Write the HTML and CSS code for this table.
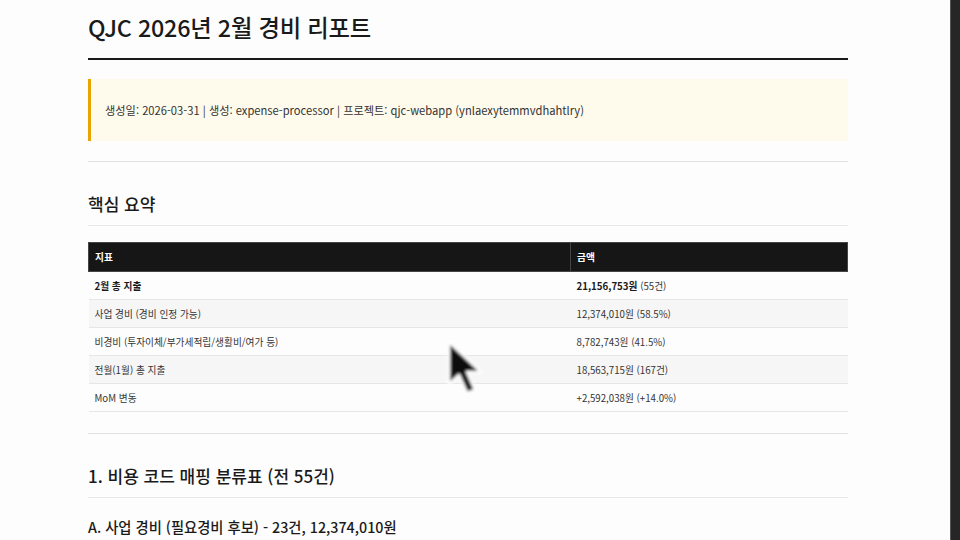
FILE: index.html
```html
<!DOCTYPE html>
<html lang="ko">
<head>
<meta charset="utf-8">
<link rel="stylesheet" href="styles.css">
</head>
<body>
<div class="screen">
  <main class="doc">
    <h1 class="title">QJC 2026년 2월 경비 리포트</h1>
    <div class="meta">생성일: 2026-03-31 | 생성: expense-processor | 프로젝트: qjc-webapp (ynlaexytemmvdhahtlry)</div>
    <hr class="rule">
    <h2 class="h2">핵심 요약</h2>
    <table class="summary">
      <thead>
        <tr><th class="c1">지표</th><th>금액</th></tr>
      </thead>
      <tbody>
        <tr><td class="strong">2월 총 지출</td><td><b>21,156,753원</b> (55건)</td></tr>
        <tr class="alt"><td>사업 경비 (경비 인정 가능)</td><td>12,374,010원 (58.5%)</td></tr>
        <tr><td>비경비 (투자이체/부가세적립/생활비/여가 등)</td><td>8,782,743원 (41.5%)</td></tr>
        <tr class="alt"><td>전월(1월) 총 지출</td><td>18,563,715원 (167건)</td></tr>
        <tr><td>MoM 변동</td><td>+2,592,038원 (+14.0%)</td></tr>
      </tbody>
    </table>
    <hr class="rule rule-b">
    <h2 class="h2">1. 비용 코드 매핑 분류표 (전 55건)</h2>
    <h3 class="h3">A. 사업 경비 (필요경비 후보) - 23건, 12,374,010원</h3>
  </main>
  <div class="edge"></div>
  <svg class="cursor" width="48" height="64" viewBox="0 0 48 64">
    <defs><filter id="blur"><feGaussianBlur stdDeviation="1.8"/></filter></defs>
    <g filter="url(#blur)">
      <path d="M7 5 L7 47 L17 38 L25 56 L33 53 L25 35 L39 35 Z" fill="#111" stroke="#fff" stroke-width="2.5" stroke-linejoin="round"/>
    </g>
  </svg>
</div>
</body>
</html>
```

FILE: styles.css
```css
* { box-sizing: border-box; }
html, body { margin: 0; padding: 0; background: #fdfdfd; }
body {
  font-family: "Noto Sans CJK KR", "Noto Sans", sans-serif;
  color: #1a1a1a;
}
.screen {
  position: relative;
  display: flex;
  width: 960px;
  height: 540px;
  overflow: hidden;
}
.doc {
  flex: 1;
  padding: 0 0 0 88px;
}
.doc > * { width: 760px; }
.edge {
  width: 10px;
  flex: none;
  background: #262626;
  border-left: 1px solid #555;
}
.title {
  margin: 0;
  padding: 11px 0 15px;
  font-size: 23.3px;
  font-weight: 500;
  line-height: 32px;
  border-bottom: 2px solid #1a1a1a;
  letter-spacing: -0.2px;
}
.meta {
  margin-top: 19px;
  background: #fffbec;
  border-left: 3px solid #eaa300;
  padding: 0 0 0 14px;
  height: 62px;
  display: flex;
  align-items: center;
  font-size: 11.2px;
  color: #333;
}
.rule {
  border: 0;
  border-top: 1px solid #e2e2e2;
  margin: 20px 0 0;
  height: 0;
}
.h2 {
  margin: 0;
  padding: 30px 0 9px;
  font-size: 17px;
  font-weight: 500;
  line-height: 24px;
  border-bottom: 1px solid #e8e8e8;
}
.summary {
  margin-top: 16px;
  border-collapse: collapse;
  font-size: 9.7px;
  color: #333;
}
.summary th {
  background: #161616;
  color: #fff;
  text-align: left;
  font-weight: 700;
  height: 29px;
  padding: 0 6px;
  border: 1px solid #444;
}
.summary th.c1 { width: 482px; }
.summary td {
  height: 28px;
  padding: 0 6px;
  border-bottom: 1px solid #e6e6e6;
}
.summary tr.alt td { background: #f6f6f6; }
.summary td.strong, .summary b { font-weight: 700; color: #1a1a1a; }
.rule-b { margin-top: 21px; }
.h3 {
  margin: 0;
  padding: 19px 0 0;
  font-size: 14.3px;
  font-weight: 500;
  line-height: 20px;
}
.cursor {
  position: absolute;
  left: 442px;
  top: 337px;
}
```
